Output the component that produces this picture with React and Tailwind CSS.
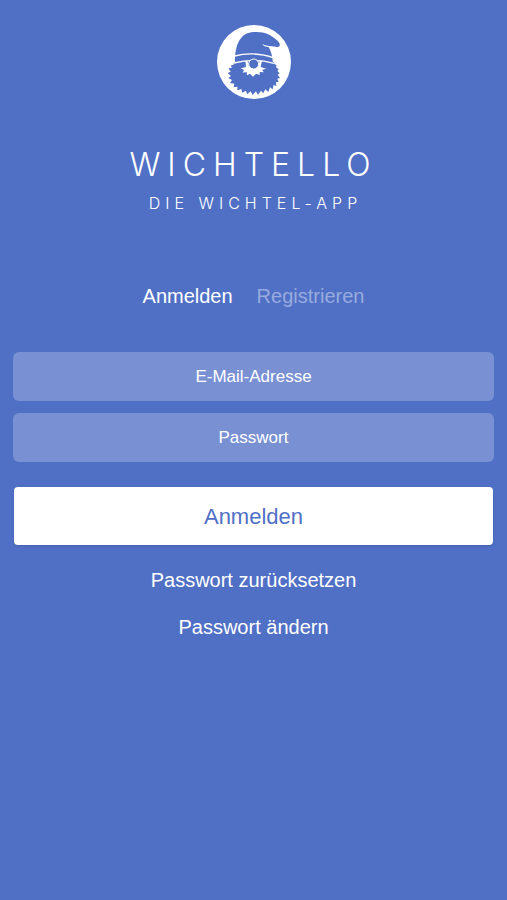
import { useState } from "react";

function GnomeLogo() {
  return (
    <svg viewBox="21 21 222 222" className="size-[74px]" role="img" aria-label="Wichtello">
      <circle cx="132" cy="132" r="111" fill="#fff" />
      {/* beard */}
      <path
        fill="#5070c6"
        d="M72 132 L192 132 L193 138 L200 142 L198 148 L206 154 L202 159 L209 166 L203 170 L210 180 L202 182 L206 192 L198 192 L199 204 L191 201 L188 214 L180 208 L175 222 L166 214 L160 226 L153 218 L144 230 L138 220 L128 231 L122 220 L111 229 L108 218 L97 224 L94 213 L82 217 L82 206 L71 208 L73 197 L60 195 L66 186 L55 180 L63 174 L53 165 L62 161 L55 151 L65 150 L63 142 L71 140 Z"
      />
      {/* hat */}
      <path
        fill="#5070c6"
        d="M75 134 C74 105 79 76 94 59 C104 47 119 42 136 42 C165 41 184 51 201 67 C207 73 211 78 209 83 C206 89 195 86 184 85 C174 83 163 83 157 77 C159 84 167 86 176 87 C183 99 187 114 189 134 Z"
      />
      <path fill="none" stroke="#fff" strokeWidth="4" d="M74 114 C107 105 153 105 189 119" />
      <path fill="none" stroke="#fff" strokeWidth="4" d="M72 135 C108 125 154 125 192 136" />
      {/* moustache and nose */}
      <path
        fill="#fff"
        d="M106 128 L108 147 L92 151 L102 156 L98 164 L110 162 L111 172 L120 167 L129 176 L138 167 L149 171 L149 162 L162 163 L156 156 L169 152 L152 147 L156 128 L149 128 L145 144 L117 144 L112 128 Z"
      />
      <circle cx="131" cy="138" r="15" fill="#5070c6" stroke="#fff" strokeWidth="3" />
    </svg>
  );
}

const inputClass =
  "block h-[49px] w-full rounded-md bg-[#7990d3] px-4 text-center text-[17px] text-white placeholder:text-white placeholder:opacity-100 focus:outline-none focus:ring-2 focus:ring-white/50";

export default function App() {
  const [tab, setTab] = useState("login");
  const [email, setEmail] = useState("");
  const [password, setPassword] = useState("");

  return (
    <div className="flex min-h-screen flex-col items-center bg-[#5070c6] px-[13px] pt-[25px] pb-8 font-['Liberation_Sans',Arial,sans-serif] text-white">
      <GnomeLogo />

      <header className="mt-[46px] text-center font-[Inter,sans-serif] font-light">
        <h1 className="text-[32px] leading-10 tracking-[7px]">WICHTELLO</h1>
        <p className="mt-1.5 pl-1 text-base leading-6 tracking-[5px]">DIE WICHTEL-APP</p>
      </header>

      <nav className="mt-[69px] flex gap-6 text-xl leading-6">
        <button type="button" onClick={() => setTab("login")} className={tab === "login" ? "text-white" : "text-[#98abdf]"}>
          Anmelden
        </button>
        <button type="button" onClick={() => setTab("register")} className={tab === "register" ? "text-white" : "text-[#98abdf]"}>
          Registrieren
        </button>
      </nav>

      <form className="mt-11 w-full" onSubmit={(e) => e.preventDefault()}>
        <div className="space-y-3">
          <input
            type="email"
            aria-label="E-Mail-Adresse"
            placeholder="E-Mail-Adresse"
            value={email}
            onChange={(e) => setEmail(e.target.value)}
            className={inputClass}
          />
          <input
            type="password"
            aria-label="Passwort"
            placeholder="Passwort"
            value={password}
            onChange={(e) => setPassword(e.target.value)}
            className={inputClass}
          />
        </div>
        <div className="mt-[25px] px-px">
          <button type="submit" className="h-[58px] w-full rounded-sm bg-white text-[22px] text-[#5070c6] shadow-sm">
            Anmelden
          </button>
        </div>
      </form>

      <div className="mt-[23px] flex flex-col items-center gap-[23px] text-xl leading-6">
        <a href="#zuruecksetzen">Passwort zurücksetzen</a>
        <a href="#aendern">Passwort ändern</a>
      </div>
    </div>
  );
}
